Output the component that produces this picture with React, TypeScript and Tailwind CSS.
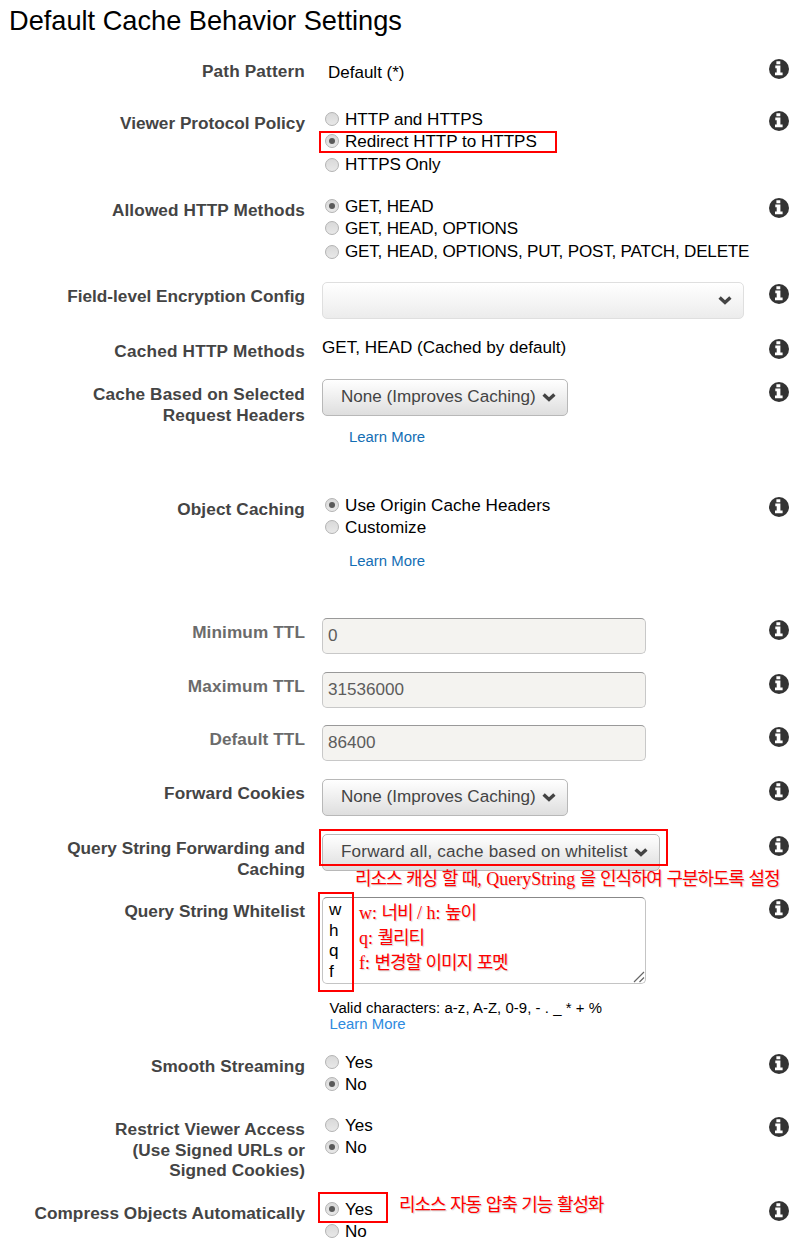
import type { ReactNode } from "react";

function InfoIcon() {
  return (
    <svg className="mt-[3px] ml-[0.5px] block h-5 w-5" viewBox="0 0 20 20" role="img" aria-label="Info">
      <circle cx="10" cy="10" r="10" fill="#333" />
      <path d="M7.4 2.3h3.9v3H7.4zM6.3 6.6h5.1v7h2.2v2.7H6v-2.7h1.7V9.3H6.3z" fill="#fff" />
    </svg>
  );
}

function Chevron() {
  return (
    <svg className="block h-[9px] w-[14px] shrink-0" viewBox="0 0 14 9">
      <path d="M1.6 1.6 7 6.5l5.4-4.9" fill="none" stroke="#444" strokeWidth="3.4" />
    </svg>
  );
}

function Row({
  label,
  height,
  muted = false,
  labelTracking = "tracking-normal",
  children,
}: {
  label: ReactNode;
  height: string;
  muted?: boolean;
  labelTracking?: string;
  children: ReactNode;
}) {
  return (
    <div className={`flex shrink-0 ${height}`}>
      <div
        className={`w-[305px] shrink-0 pt-[5px] text-right text-[17.2px] leading-[20.5px] font-bold ${labelTracking} ${
          muted ? "text-[#6b6b6b]" : "text-[#444]"
        }`}
      >
        {label}
      </div>
      <div className="relative ml-[17px] w-[446px] shrink-0 whitespace-nowrap">{children}</div>
      <InfoIcon />
    </div>
  );
}

function RadioGroup({
  options,
  selected,
  tracking = "tracking-normal",
}: {
  options: string[];
  selected: number;
  tracking?: string;
}) {
  return (
    <div className="flex flex-col pl-[3px]">
      {options.map((option, i) => (
        <div key={option} className={`flex items-center ${i === 2 ? "h-6 pt-0.5" : "h-[22px]"}`}>
          <span className="flex h-[14px] w-[14px] shrink-0 items-center justify-center rounded-full border border-[#b3b3b3] bg-linear-to-b from-[#d9d9d9] to-[#e8e8e8]">
            {i === selected && <span className="h-[6px] w-[6px] rounded-full bg-[#5a5a5a]" />}
          </span>
          <span className={`ml-[6px] text-[17.1px] leading-[22px] ${i === 2 ? "pt-0" : "pt-[2px]"} ${tracking}`}>{option}</span>
        </div>
      ))}
    </div>
  );
}

function Select({
  text,
  width,
  tracking = "tracking-normal",
}: {
  text: string;
  width: string;
  tracking?: string;
}) {
  return (
    <div
      className={`flex h-[37px] items-center rounded-[5px] border border-[#b8b8b8] bg-linear-to-b from-white to-[#dedede] pl-[18px] text-[17.1px] text-[#444] ${width}`}
    >
      <span className={`-mt-[2px] mr-[6px] leading-5 ${tracking}`}>{text}</span>
      <Chevron />
    </div>
  );
}

function DisabledInput({ value }: { value: string }) {
  return (
    <div className="mt-px flex h-[36px] w-[324px] items-center rounded-[5px] border border-[#c8c8c8] border-t-[#999] bg-[#f4f3f0] pl-[5px] text-[17.1px] text-[#5c5c5c]">
      {value}
    </div>
  );
}

function Highlight({ box }: { box: string }) {
  return <div className={`pointer-events-none absolute border-2 border-[#f00] ${box}`} />;
}

function Note({ place, children }: { place: string; children: ReactNode }) {
  return (
    <div
      className={`absolute font-['Liberation_Serif','Noto_Sans_CJK_KR',serif] text-[18px] leading-6 whitespace-nowrap text-[#f00] [text-shadow:1px_1px_1px_rgba(0,0,0,0.18)] ${place}`}
    >
      {children}
    </div>
  );
}

function Ko({ children }: { children: ReactNode }) {
  return <span className="tracking-[-1.1px] [word-spacing:1.3px]">{children}</span>;
}

export default function App() {
  return (
    <div className="flex h-[1249px] w-[800px] flex-col overflow-hidden bg-white font-['Liberation_Sans',Arial,sans-serif] text-black">
      <h1 className="h-14 shrink-0 pt-[5px] pl-[9px] text-[27.2px] leading-8">Default Cache Behavior Settings</h1>

      <Row label="Path Pattern" height="h-[52px]" labelTracking="tracking-[0.15px]">
        <div className="pt-[6px] pl-[6px] text-[17px] leading-[21px]">Default (*)</div>
      </Row>
      <Row label="Viewer Protocol Policy" height="h-[87px]">
        <RadioGroup
          options={["HTTP and HTTPS", "Redirect HTTP to HTTPS", "HTTPS Only"]}
          selected={1}
          tracking="tracking-[-0.03px]"
        />
        <Highlight box="-left-[3px] top-[23px] h-[22px] w-[238px]" />
      </Row>
      <Row label="Allowed HTTP Methods" height="h-[86px]" labelTracking="tracking-[0.12px]">
        <RadioGroup
          options={["GET, HEAD", "GET, HEAD, OPTIONS", "GET, HEAD, OPTIONS, PUT, POST, PATCH, DELETE"]}
          selected={0}
          tracking="tracking-[-0.21px]"
        />
      </Row>
      <Row label="Field-level Encryption Config" height="h-[55px]">
        <div className="mt-px flex h-[37px] w-[422px] items-center justify-end rounded-[5px] border border-[#dfdfdf] bg-linear-to-b from-white to-[#ececec] pr-[11px]">
          <Chevron />
        </div>
      </Row>
      <Row label="Cached HTTP Methods" height="h-[43px]" labelTracking="tracking-[0.2px]">
        <div className="pt-px text-[17.1px] leading-[21px]">GET, HEAD (Cached by default)</div>
      </Row>
      <Row label={<>Cache Based on Selected<br />Request Headers</>} height="h-[115px]" labelTracking="tracking-[0.12px]">
        <Select text="None (Improves Caching)" width="w-[246px]" />
        <div className="mt-[11px] pl-[27px] text-[14.9px] leading-5 text-[#146eb4]">Learn More</div>
      </Row>
      <Row label="Object Caching" height="h-[123px]" labelTracking="tracking-[0.12px]">
        <RadioGroup
          options={["Use Origin Cache Headers", "Customize"]}
          selected={0}
          tracking="tracking-[0.05px]"
        />
        <div className="mt-[13px] pl-[27px] text-[14.9px] leading-5 text-[#146eb4]">Learn More</div>
      </Row>
      <Row label="Minimum TTL" height="h-[54px]" muted labelTracking="tracking-[0.1px]">
        <DisabledInput value="0" />
      </Row>
      <Row label="Maximum TTL" height="h-[53px]" muted labelTracking="tracking-[0.15px]">
        <DisabledInput value="31536000" />
      </Row>
      <Row label="Default TTL" height="h-[54px]" muted labelTracking="tracking-[0.1px]">
        <DisabledInput value="86400" />
      </Row>
      <Row label="Forward Cookies" height="h-[55px]" labelTracking="tracking-[0.1px]">
        <div className="pt-px">
          <Select text="None (Improves Caching)" width="w-[246px]" />
        </div>
      </Row>
      <Row label={<>Query String Forwarding and<br />Caching</>} height="h-[63px]">
        <div className="pt-px">
          <Select text="Forward all, cache based on whitelist" width="w-[338px]" tracking="tracking-[0.17px]" />
        </div>
        <Highlight box="-left-[3px] -top-[4px] h-[37px] w-[349px]" />
        <Note place="left-[33px] top-[34px]">
          <Ko>리소스 캐싱 할 때</Ko>, QueryString <Ko>을 인식하여 구분하도록 설정</Ko>
        </Note>
      </Row>
      <Row label="Query String Whitelist" height="h-[155px]">
        <div className="relative mt-px h-[87px] w-[324px] rounded-[5px] border border-[#c4c4c4] border-t-[#888] bg-white pt-[2px] pl-[6px] text-[17.1px] leading-[20.5px] whitespace-pre">
          {"w\nh\nq\nf"}
          <svg className="absolute right-0 bottom-0 h-3 w-3" viewBox="0 0 12 12">
            <path d="M1 11 11 1M6.5 11 11 6.5" stroke="#666" strokeWidth="1.2" />
          </svg>
        </div>
        <div className="mt-4 pl-[7.5px] text-[14.9px] leading-4">
          <p className="tracking-[0.06px]">Valid characters: a-z, A-Z, 0-9, - . _ * + %</p>
          <p className="text-[#2e8ade]">Learn More</p>
        </div>
        <Highlight box="-left-[4px] -top-[4px] h-[100px] w-[36px]" />
        <Note place="left-[37px] top-[5px]">
          w: <Ko>너비</Ko> / h: <Ko>높이</Ko>
        </Note>
        <Note place="left-[37px] top-[30px]">
          q: <Ko>퀄리티</Ko>
        </Note>
        <Note place="left-[37px] top-[55px]">
          f: <Ko>변경할 이미지 포멧</Ko>
        </Note>
      </Row>
      <Row label="Smooth Streaming" height="h-[63px]" labelTracking="tracking-[0.08px]">
        <RadioGroup options={["Yes", "No"]} selected={1} />
      </Row>
      <Row
        label={<>Restrict Viewer Access<br />(Use Signed URLs or<br />Signed Cookies)</>}
        height="h-[84px]"
        labelTracking="tracking-[0.08px]"
      >
        <RadioGroup options={["Yes", "No"]} selected={1} />
      </Row>
      <Row label="Compress Objects Automatically" height="h-[51px]" labelTracking="tracking-[0.06px]">
        <RadioGroup options={["Yes", "No"]} selected={0} />
        <Highlight box="-left-[4px] -top-[6px] h-[31px] w-[70px]" />
        <Note place="left-[77px] -top-[5px]">
          <Ko>리소스 자동 압축 기능 활성화</Ko>
        </Note>
      </Row>
    </div>
  );
}
